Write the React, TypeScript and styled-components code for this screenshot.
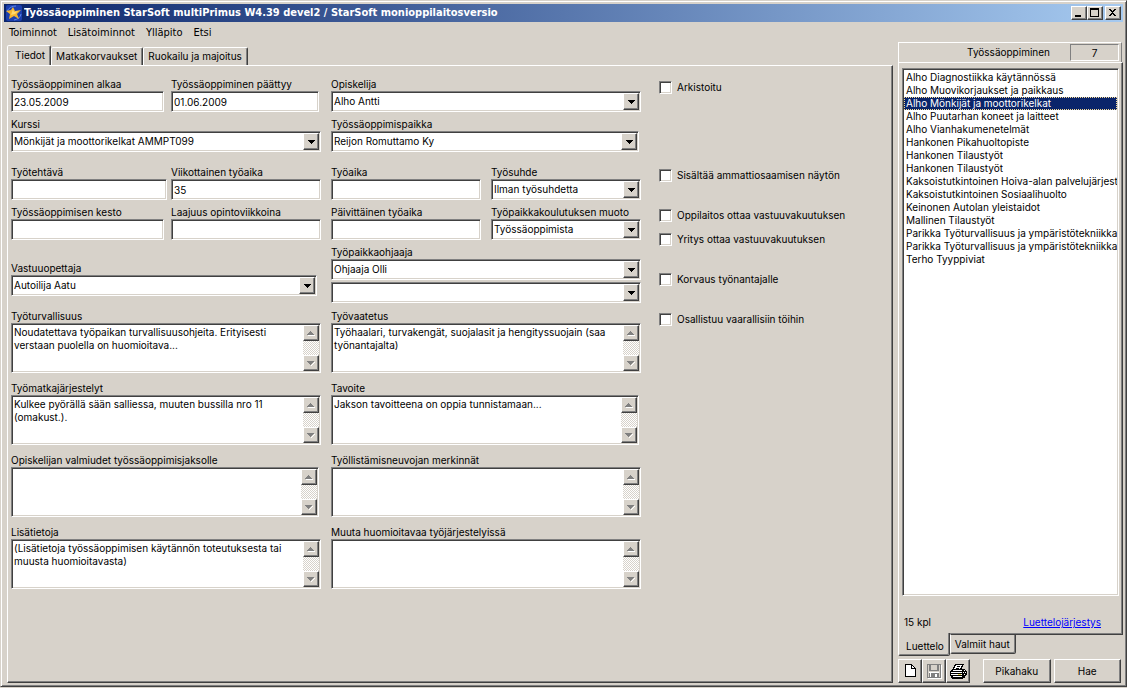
import React, { useState } from "react";
import styled, { createGlobalStyle, css } from "styled-components";

const face = "#d7d2ca";
const mid = "#808080";
const dark = "#404040";
const uiFont = 'Inter, "Liberation Sans", Arial, sans-serif';
const captionFont = '"DejaVu Sans Condensed", Tahoma, "DejaVu Sans", sans-serif';

const GlobalStyle = createGlobalStyle`
  *, *::before, *::after { box-sizing: border-box; }
  body { margin: 0; background: ${face}; }
  button, input, textarea, select { font: inherit; color: inherit; margin: 0; border-radius: 0; }
`;

const raised = css`
  border: 1px solid;
  border-color: #fff ${dark} ${dark} #fff;
  box-shadow: inset -1px -1px ${mid};
`;

const sunken = css`
  background: #fff;
  border: 1px solid;
  border-color: ${mid} #fff #fff ${mid};
  box-shadow: inset 1px 1px ${dark}, inset -1px -1px ${face};
`;

const Page = styled.div`
  min-height: 100vh;
  padding-bottom: 1px;
  display: flex;
  font: 10px/13px ${uiFont};
  color: #000;
`;

const Window = styled.div`
  flex: 1;
  min-width: 0;
  display: flex;
  flex-direction: column;
  padding: 3px;
  background: ${face};
  border: 1px solid;
  border-color: ${face} ${dark} ${dark} ${face};
  box-shadow: inset 1px 1px #fff, inset -1px -1px ${mid};
`;

const TitleBar = styled.header`
  height: 18px;
  display: flex;
  align-items: center;
  padding: 0 2px;
  background: linear-gradient(90deg, #0a246a, #a6caf0);
`;

const Title = styled.h1`
  flex: 1;
  margin: 0 0 0 2px;
  font: bold 11px/18px ${captionFont};
  color: #fff;
  white-space: nowrap;
  overflow: hidden;
`;

const CaptionButton = styled.button<{ $apart?: boolean }>`
  ${raised}
  width: 16px;
  height: 14px;
  padding: 0;
  margin-left: ${(p) => (p.$apart ? 2 : 0)}px;
  background: ${face};
  display: flex;
  svg { display: block; }
`;

const MenuBar = styled.nav`
  height: 20px;
  display: flex;
  align-items: center;
  gap: 11px;
  padding-left: 5px;
  font: 11px/13px ${captionFont};
`;

const MenuItem = styled.button`
  padding: 0;
  border: 0;
  background: none;
`;

const Workspace = styled.div`
  flex: 1;
  display: flex;
  gap: 5px;
  padding-left: 3px;
`;

const Main = styled.main`
  flex: 1;
  min-width: 0;
  display: flex;
  flex-direction: column;
  padding-top: 3px;
`;

const TabStrip = styled.div`
  height: 20px;
  display: flex;
  align-items: flex-end;
`;

const Tab = styled.button<{ $active?: boolean }>`
  height: ${(p) => (p.$active ? 21 : 18)}px;
  margin-bottom: ${(p) => (p.$active ? -1 : 0)}px;
  padding: 0 5px ${(p) => (p.$active ? 2 : 0)}px ${(p) => (p.$active ? 7 : 4)}px;
  background: ${face};
  border: 1px solid;
  border-color: #fff ${dark} transparent #fff;
  border-bottom-width: 0;
  border-radius: 2px 2px 0 0;
  box-shadow: inset -1px 0 ${mid};
  white-space: nowrap;
`;

const Panel = styled.section`
  ${raised}
  flex: 1;
  display: flex;
  padding: 9px 0 0 3px;
`;

const Form = styled.form`
  flex: 640;
  min-width: 0;
  padding-top: 3px;
  display: grid;
  grid-template-columns: repeat(4, minmax(0, 1fr));
  grid-template-rows: 40px 48px 40px 40px 64px repeat(4, 72px);
  align-content: start;
`;

const Field = styled.div<{ $wide?: boolean; $inset: number; $low?: boolean }>`
  grid-column: span ${(p) => (p.$wide ? 2 : 1)};
  margin-right: ${(p) => p.$inset}px;
  padding-top: ${(p) => (p.$low ? 16 : 0)}px;
  display: flex;
  flex-direction: column;
`;

const Label = styled.label`
  height: 13px;
  white-space: nowrap;
`;

const TextInput = styled.input`
  ${sunken}
  width: 100%;
  height: 21px;
  padding: 0 2px;
`;

const ComboFrame = styled.div<{ $second?: boolean }>`
  ${sunken}
  height: 21px;
  margin-top: ${(p) => (p.$second ? 2 : 0)}px;
  padding: 1px;
  display: grid;
  grid-template: 1fr / minmax(0, 1fr);
`;

const Select = styled.select`
  grid-area: 1 / 1;
  appearance: none;
  border: 0;
  background: transparent;
  padding: 0 18px 0 1px;
  outline-offset: -1px;
`;

const ComboArrow = styled.span`
  ${raised}
  grid-area: 1 / 1;
  justify-self: end;
  width: 16px;
  background: ${face};
  display: flex;
  align-items: center;
  justify-content: center;
  pointer-events: none;
`;

const MemoFrame = styled.div`
  ${sunken}
  height: 50px;
  padding: 1px;
  display: flex;
`;

const Memo = styled.textarea`
  flex: 1;
  min-width: 0;
  border: 0;
  outline: 0;
  resize: none;
  overflow: hidden;
  padding: 1px;
  background: transparent;
`;

const ScrollTrack = styled.div`
  width: 16px;
  display: flex;
  flex-direction: column;
  justify-content: space-between;
  background: repeating-conic-gradient(#fff 0 25%, ${face} 0 50%) 0 0 / 2px 2px;
`;

const ScrollButton = styled.button`
  ${raised}
  height: 16px;
  padding: 0;
  background: ${face};
  display: flex;
  align-items: center;
  justify-content: center;
`;

const Checks = styled.div`
  flex: 233;
  min-width: 0;
  padding-left: 8px;
  display: flex;
  flex-direction: column;
`;

const CheckLabel = styled.label<{ $gap: number }>`
  height: 24px;
  margin-top: ${(p) => p.$gap}px;
  display: flex;
  align-items: center;
  gap: 5px;
  white-space: nowrap;
`;

const CheckBox = styled.input`
  ${sunken}
  appearance: none;
  width: 13px;
  height: 13px;
  &:checked {
    background: linear-gradient(#000, #000) center / 5px 5px no-repeat #fff;
  }
`;

const Side = styled.aside`
  width: 225px;
  display: flex;
  flex-direction: column;
`;

const SideHeader = styled.div`
  height: 20px;
  margin-right: 1px;
  padding-right: 2px;
  border: 1px solid;
  border-color: #fff ${mid} transparent #fff;
  border-bottom-width: 0;
  display: flex;
  align-items: center;
  justify-content: flex-end;
  gap: 20px;
`;

const Count = styled.output`
  width: 49px;
  height: 17px;
  border: 1px solid;
  border-color: ${mid} #fff #fff ${mid};
  text-align: center;
  line-height: 16px;
`;

const SidePanel = styled.section`
  ${raised}
  flex: 1;
  display: flex;
  flex-direction: column;
  padding: 5px 3px 1px;
`;

const List = styled.ul`
  ${sunken}
  flex: 1;
  margin: 0;
  padding: 2px 1px 1px;
  list-style: none;
  overflow: hidden;
`;

const ListItem = styled.button<{ $selected: boolean }>`
  display: block;
  width: 100%;
  height: 13px;
  padding: 0 0 0 2px;
  border: 0;
  text-align: left;
  white-space: nowrap;
  overflow: hidden;
  line-height: 13px;
  background: ${(p) => (p.$selected ? "#0a246a" : "transparent")};
  color: ${(p) => (p.$selected ? "#fff" : "#000")};
  outline: ${(p) => (p.$selected ? "1px dotted #f5db95" : "none")};
  outline-offset: -1px;
`;

const SideFooter = styled.div`
  height: 37px;
  padding: 20px 18px 0 2px;
  display: flex;
  justify-content: space-between;
`;

const OrderLink = styled.a`
  color: #0000ff;
  text-decoration: underline;
`;

const BottomTabs = styled.div`
  height: 22px;
  display: flex;
  align-items: flex-start;
`;

const BottomTab = styled.button<{ $active?: boolean }>`
  height: ${(p) => (p.$active ? 23 : 20)}px;
  margin-top: ${(p) => (p.$active ? -2 : -1)}px;
  padding: ${(p) => (p.$active ? 4 : 0)}px 5px 0 ${(p) => (p.$active ? 7 : 4)}px;
  background: ${face};
  border: 1px solid;
  border-color: ${(p) => (p.$active ? "transparent" : dark)} ${dark} ${dark} #fff;
  border-top-width: ${(p) => (p.$active ? 0 : 1)}px;
  border-radius: 0 0 2px 2px;
  box-shadow: inset -1px -1px ${mid};
  white-space: nowrap;
`;

const Toolbar = styled.div`
  display: flex;
  margin: 2px 2px 0 0;
`;

const ToolButton = styled.button`
  ${raised}
  width: 24px;
  height: 24px;
  padding: 0;
  background: ${face};
  display: flex;
  align-items: center;
  justify-content: center;
`;

const PushButton = styled.button<{ $gap: number }>`
  ${raised}
  flex: 1;
  height: 24px;
  margin-left: ${(p) => p.$gap}px;
  padding: 0;
  background: ${face};
`;

const StarLogo = () => (
  <svg width="16" height="16" viewBox="0 0 16 16" aria-hidden="true">
    <rect width="16" height="16" rx="2" fill="#1c3fae" />
    <path d="M1 6Q4 1 10 1M15 9Q14 14 8 15" fill="none" stroke="#5d86e8" />
    <path d="M7 2l2 4 6-1-4 4 2 5-5-3-5 3 1-5-4-3 5-1z" fill="#f6b52e" />
    <path d="M7 4l1 3 4-1-3 3-4 1z" fill="#ffd970" />
  </svg>
);

const DownArrow = () => (
  <svg width="7" height="4" viewBox="0 0 7 4" shapeRendering="crispEdges" aria-hidden="true">
    <path d="M0 0h7v1H6v1H5v1H4v1H3V3H2V2H1V1H0z" fill="#000" />
  </svg>
);

const ScrollArrow = ({ up }: { up?: boolean }) => (
  <svg width="8" height="5" viewBox="0 0 8 5" shapeRendering="crispEdges" aria-hidden="true">
    {up ? (
      <>
        <path d="M1 4h7v1H1z" fill="#fff" />
        <path d="M3 0h1v1h1v1h1v1h1v1H0V3h1V2h1V1h1z" fill={mid} />
      </>
    ) : (
      <>
        <path d="M7 1h1v1H7v1H6v1H5v1H4V4h1V3h1V2h1z" fill="#fff" />
        <path d="M0 0h7v1H6v1H5v1H4v1H3V3H2V2H1V1H0z" fill={mid} />
      </>
    )}
  </svg>
);

const NewIcon = () => (
  <svg width="12" height="14" viewBox="0 0 12 14" shapeRendering="crispEdges" aria-hidden="true">
    <path d="M1 0h7v1h1v1h1v1h1v1h1v9H1z" fill="#000" />
    <path d="M2 1h5v4h4v7H2z" fill="#fff" />
    <path d="M8 2h1v1h1v1H8z" fill="#fff" />
  </svg>
);

const SaveIcon = () => (
  <svg width="15" height="15" viewBox="0 0 15 15" shapeRendering="crispEdges" aria-hidden="true">
    <path d="M1 1h14v14H1z" fill="#fff" />
    <path d="M0 0h14v14H0z" fill={mid} />
    <path d="M1 1h1v12H1zM12 1h1v12h-1zM2 7h10v1H2z" fill={face} />
    <path d="M3 0h8v6H3z" fill={mid} />
    <path d="M4 1h6v5H4z" fill={face} />
    <path d="M2 8h10v1H2zM3 9h1v4H3z" fill="#fff" />
    <path d="M4 10h4v3H4z" fill={mid} />
    <path d="M8 10h2v3H8z" fill="#fff" />
  </svg>
);

const PrintIcon = () => (
  <svg width="17" height="15" viewBox="0 0 17 15" shapeRendering="crispEdges" aria-hidden="true">
    <path d="M5 0h9v1h-1v2h-1v2h3v1h1v1h1v4h-1v1h-1v2h-2v1H2v-1H1v-2H0V7h1V6h1V5h1V3h1V1h1z" fill="#000" />
    <path d="M6 1h6v1h-1v2h-1v1H4V4h1V2h1z" fill="#fff" />
    <path d="M7 2h3v1H7zM6 4h3v1H6z" fill="#000" />
    <path d="M3 6h9v1H3zM1 8h11v1H1zM1 10h11v1H1zM3 12h9v1H3z" fill="#fff" />
    <path d="M14 6h1v1h-1zM13 8h1v1h-1zM15 8h1v1h-1zM14 10h1v1h-1z" fill="#fff" />
    <path d="M8 10h3v1H8z" fill="#e8dc50" />
  </svg>
);

type FieldProps = { id: string; label: string; value?: string; wide?: boolean; inset?: number };

const TextField = ({ id, label, value = "", inset = 10 }: FieldProps) => (
  <Field $inset={inset}>
    <Label htmlFor={id}>{label}</Label>
    <TextInput id={id} type="text" defaultValue={value} />
  </Field>
);

const Combo = ({ id, value, second, name }: { id: string; value: string; second?: boolean; name?: string }) => (
  <ComboFrame $second={second}>
    <Select id={id} aria-label={name} defaultValue={value}>
      <option value={value}>{value}</option>
    </Select>
    <ComboArrow>
      <DownArrow />
    </ComboArrow>
  </ComboFrame>
);

const ComboField = ({ id, label, value = "", wide, inset = 10, low }: FieldProps & { low?: boolean }) => (
  <Field $wide={wide} $inset={inset} $low={low}>
    <Label htmlFor={id}>{label}</Label>
    <Combo id={id} value={value} />
  </Field>
);

const MemoField = ({ id, label, value = "", inset = 10 }: FieldProps) => (
  <Field $wide $inset={inset}>
    <Label htmlFor={id}>{label}</Label>
    <MemoFrame>
      <Memo id={id} defaultValue={value} spellCheck={false} />
      <ScrollTrack>
        <ScrollButton type="button" disabled aria-label="Ylös">
          <ScrollArrow up />
        </ScrollButton>
        <ScrollButton type="button" disabled aria-label="Alas">
          <ScrollArrow />
        </ScrollButton>
      </ScrollTrack>
    </MemoFrame>
  </Field>
);

const checks = [
  { label: "Arkistoitu", gap: 0 },
  { label: "Sisältää ammattiosaamisen näytön", gap: 64 },
  { label: "Oppilaitos ottaa vastuuvakuutuksen", gap: 16 },
  { label: "Yritys ottaa vastuuvakuutuksen", gap: 0 },
  { label: "Korvaus työnantajalle", gap: 16 },
  { label: "Osallistuu vaarallisiin töihin", gap: 16 },
];

const entries = [
  "Alho Diagnostiikka käytännössä",
  "Alho Muovikorjaukset ja paikkaus",
  "Alho Mönkijät ja moottorikelkat",
  "Alho Puutarhan koneet ja laitteet",
  "Alho Vianhakumenetelmät",
  "Hankonen Pikahuoltopiste",
  "Hankonen Tilaustyöt",
  "Hankonen Tilaustyöt",
  "Kaksoistutkintoinen Hoiva-alan palvelujärjest",
  "Kaksoistutkintoinen Sosiaalihuolto",
  "Keinonen Autolan yleistaidot",
  "Mallinen Tilaustyöt",
  "Parikka Työturvallisuus ja ympäristötekniikka",
  "Parikka Työturvallisuus ja ympäristötekniikka",
  "Terho Tyyppiviat",
];

export default function App() {
  const [selected, setSelected] = useState(2);

  return (
    <Page>
      <GlobalStyle />
      <Window>
        <TitleBar>
          <StarLogo />
          <Title>Työssäoppiminen StarSoft multiPrimus W4.39 devel2 / StarSoft monioppilaitosversio</Title>
          <CaptionButton aria-label="Pienennä">
            <svg width="14" height="12" shapeRendering="crispEdges">
              <path d="M3 8h6v2H3z" />
            </svg>
          </CaptionButton>
          <CaptionButton aria-label="Suurenna">
            <svg width="14" height="12" shapeRendering="crispEdges">
              <path d="M2 1h9v9H2zM3 3v6h7V3z" fillRule="evenodd" />
            </svg>
          </CaptionButton>
          <CaptionButton aria-label="Sulje" $apart>
            <svg width="14" height="12" shapeRendering="crispEdges">
              <path d="M3 2h2v1h1v1h1V3h1V2h2v1H9v1H8v1H7v1h1v1h1v1h1v1H8V8H7V7H6v1H5v1H3V8h1V7h1V6h1V5H5V4H4V3H3z" />
            </svg>
          </CaptionButton>
        </TitleBar>
        <MenuBar>
          <MenuItem>Toiminnot</MenuItem>
          <MenuItem>Lisätoiminnot</MenuItem>
          <MenuItem>Ylläpito</MenuItem>
          <MenuItem>Etsi</MenuItem>
        </MenuBar>
        <Workspace>
          <Main>
            <TabStrip role="tablist">
              <Tab role="tab" aria-selected="true" $active>Tiedot</Tab>
              <Tab role="tab" aria-selected="false">Matkakorvaukset</Tab>
              <Tab role="tab" aria-selected="false">Ruokailu ja majoitus</Tab>
            </TabStrip>
            <Panel>
              <Form>
                <TextField id="alkaa" label="Työssäoppiminen alkaa" value="23.05.2009" inset={7} />
                <TextField id="paattyy" label="Työssäoppiminen päättyy" value="01.06.2009" inset={12} />
                <ComboField id="opiskelija" label="Opiskelija" value="Alho Antti" wide />

                <ComboField id="kurssi" label="Kurssi" value="Mönkijät ja moottorikelkat AMMPT099" wide />
                <ComboField id="paikka" label="Työssäoppimispaikka" value="Reijon Romuttamo Ky" wide inset={12} />

                <TextField id="tehtava" label="Työtehtävä" inset={4} />
                <TextField id="viikko" label="Viikottainen työaika" value="35" />
                <TextField id="tyoaika" label="Työaika" />
                <ComboField id="suhde" label="Työsuhde" value="Ilman työsuhdetta" />

                <TextField id="kesto" label="Työssäoppimisen kesto" inset={7} />
                <TextField id="laajuus" label="Laajuus opintoviikkoina" />
                <TextField id="paivittainen" label="Päivittäinen työaika" />
                <ComboField id="muoto" label="Työpaikkakoulutuksen muoto" value="Työssäoppimista" />

                <ComboField id="opettaja" label="Vastuuopettaja" value="Autoilija Aatu" wide inset={14} low />
                <Field $wide $inset={10}>
                  <Label htmlFor="ohjaaja">Työpaikkaohjaaja</Label>
                  <Combo id="ohjaaja" value="Ohjaaja Olli" />
                  <Combo id="ohjaaja2" value="" name="Toinen työpaikkaohjaaja" second />
                </Field>

                <MemoField id="turvallisuus" label="Työturvallisuus" value="Noudatettava työpaikan turvallisuusohjeita. Erityisesti verstaan puolella on huomioitava..." />
                <MemoField id="vaatetus" label="Työvaatetus" value="Työhaalari, turvakengät, suojalasit ja hengityssuojain (saa työnantajalta)" />
                <MemoField id="matka" label="Työmatkajärjestelyt" value="Kulkee pyörällä sään salliessa, muuten bussilla nro 11 (omakust.)." />
                <MemoField id="tavoite" label="Tavoite" value="Jakson tavoitteena on oppia tunnistamaan..." inset={12} />
                <MemoField id="valmiudet" label="Opiskelijan valmiudet työssäoppimisjaksolle" inset={12} />
                <MemoField id="merkinnat" label="Työllistämisneuvojan merkinnät" />
                <MemoField id="lisatietoja" label="Lisätietoja" value="(Lisätietoja työssäoppimisen käytännön toteutuksesta tai muusta huomioitavasta)" />
                <MemoField id="muuta" label="Muuta huomioitavaa työjärjestelyissä" />
              </Form>
              <Checks>
                {checks.map((c) => (
                  <CheckLabel key={c.label} $gap={c.gap}>
                    <CheckBox type="checkbox" />
                    {c.label}
                  </CheckLabel>
                ))}
              </Checks>
            </Panel>
          </Main>
          <Side>
            <SideHeader>
              <span>Työssäoppiminen</span>
              <Count>7</Count>
            </SideHeader>
            <SidePanel>
              <List>
                {entries.map((entry, i) => (
                  <li key={i}>
                    <ListItem $selected={i === selected} onClick={() => setSelected(i)}>
                      {entry}
                    </ListItem>
                  </li>
                ))}
              </List>
              <SideFooter>
                <span>15 kpl</span>
                <OrderLink href="#jarjestys">Luettelojärjestys</OrderLink>
              </SideFooter>
            </SidePanel>
            <BottomTabs role="tablist">
              <BottomTab role="tab" aria-selected="true" $active>Luettelo</BottomTab>
              <BottomTab role="tab" aria-selected="false">Valmiit haut</BottomTab>
            </BottomTabs>
            <Toolbar>
              <ToolButton aria-label="Uusi"><NewIcon /></ToolButton>
              <ToolButton aria-label="Tallenna" disabled><SaveIcon /></ToolButton>
              <ToolButton aria-label="Tulosta"><PrintIcon /></ToolButton>
              <PushButton $gap={13}>Pikahaku</PushButton>
              <PushButton $gap={3}>Hae</PushButton>
            </Toolbar>
          </Side>
        </Workspace>
      </Window>
    </Page>
  );
}
